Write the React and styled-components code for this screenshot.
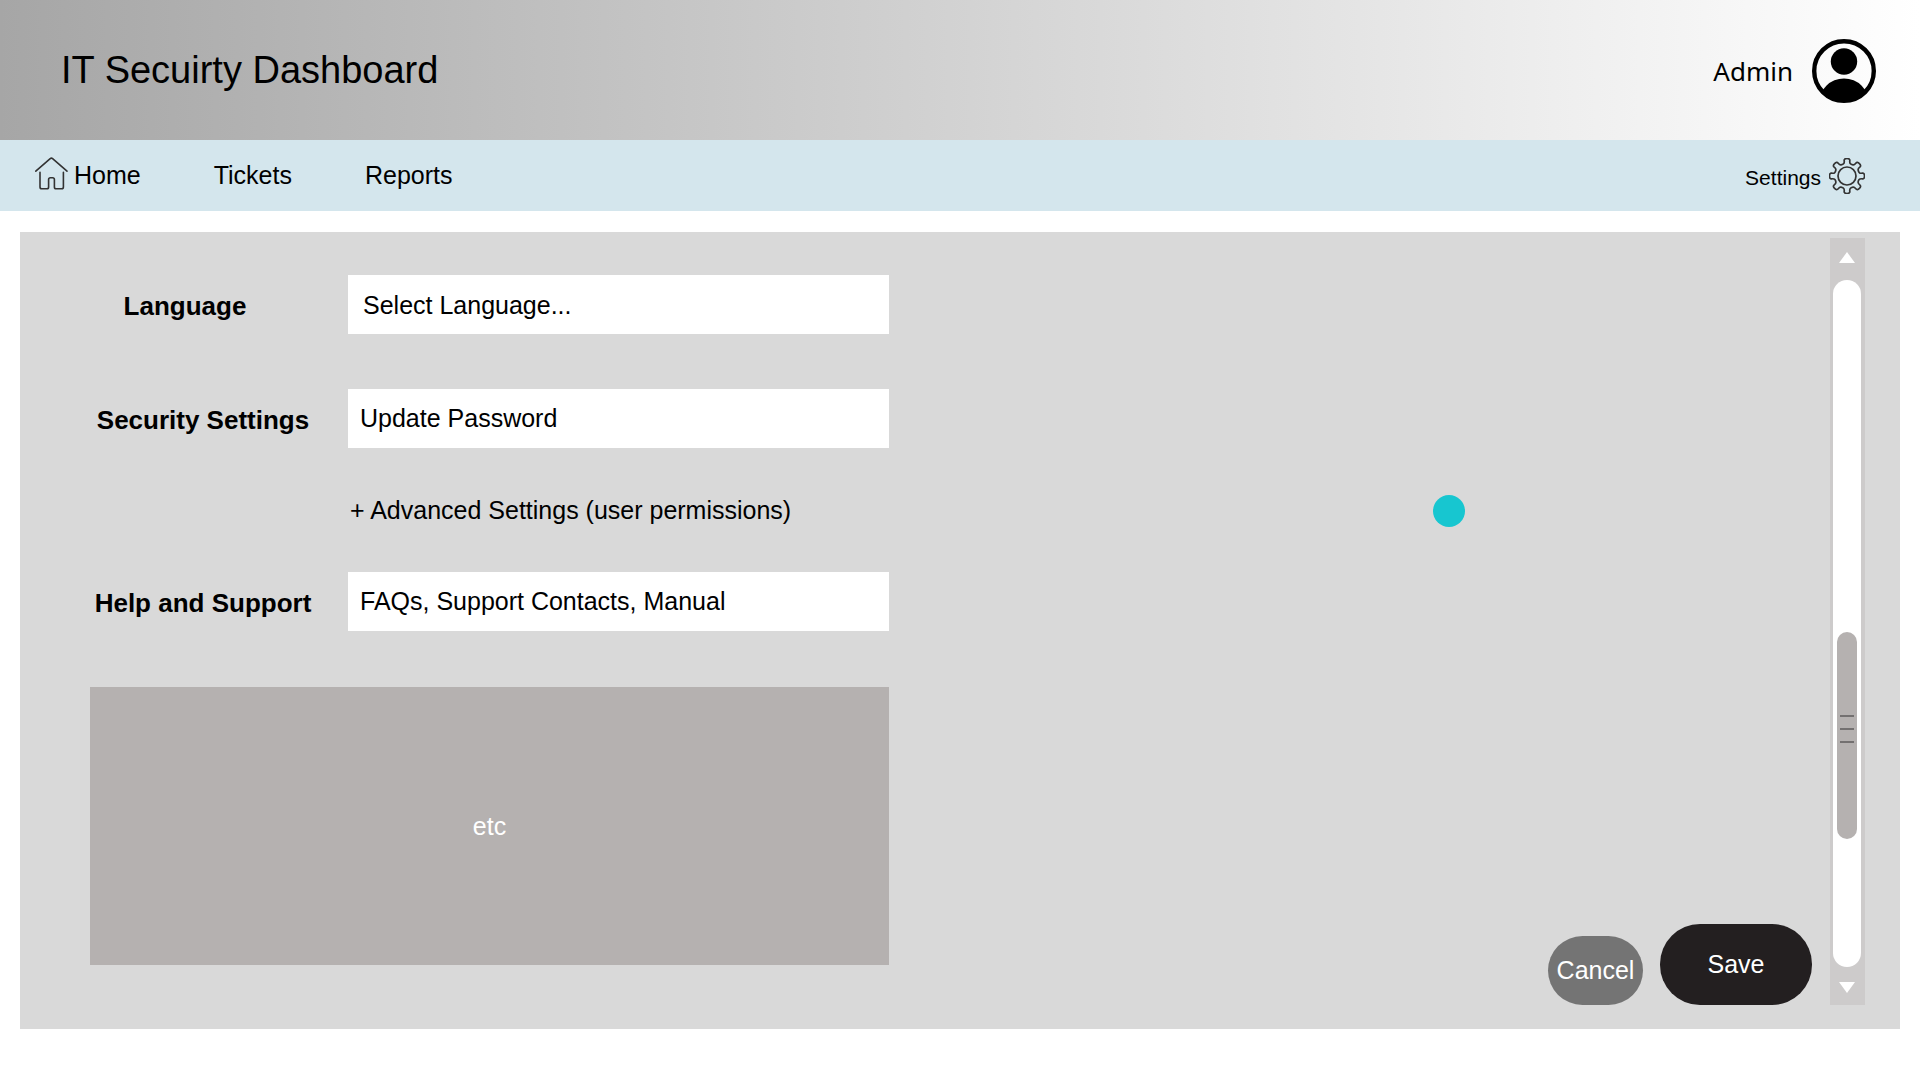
import React from "react";
import styled, { createGlobalStyle } from "styled-components";

const GlobalStyle = createGlobalStyle`
  *, *::before, *::after { box-sizing: border-box; }
  body {
    margin: 0;
    background: #fff;
    color: #000;
    font-family: "Liberation Sans", Arial, sans-serif;
    font-size: 25px;
  }
  button, input, select { font: inherit; color: inherit; border: 0; border-radius: 0; margin: 0; }
  a { color: inherit; text-decoration: none; }
  svg { display: block; flex: none; }
`;

const Header = styled.header`
  display: flex;
  align-items: center;
  justify-content: space-between;
  height: 140px;
  padding: 2px 44px 0 61px;
  background: linear-gradient(90deg, #a6a6a6, #fff);
`;

const Title = styled.h1`
  margin: 0;
  padding-bottom: 2px;
  font-size: 38px;
  font-weight: 400;
`;

const Account = styled.a`
  display: flex;
  align-items: center;
  gap: 19px;
  font-family: "Noto Sans", sans-serif;
  font-size: 26px;
`;

const Nav = styled.nav`
  display: flex;
  align-items: center;
  justify-content: space-between;
  height: 71px;
  padding: 0 55px 0 34px;
  background: #d4e6ed;
`;

const NavLinks = styled.div`
  display: flex;
  align-items: center;
  gap: 73px;
`;

const NavLink = styled.a`
  display: flex;
  align-items: center;
  gap: 5px;
`;

const SettingsLink = styled.a`
  display: flex;
  align-items: center;
  gap: 8px;
  font-size: 21px;

  span { padding-top: 4px; }
`;

const Panel = styled.main`
  position: relative;
  display: flex;
  gap: 18px;
  margin: 21px 20px;
  padding: 6px 35px 24px 70px;
  background: #d9d9d9;
`;

const Form = styled.form`
  display: flex;
  flex: 1;
  justify-content: space-between;
`;

const Fields = styled.div`
  display: flex;
  flex-direction: column;
  padding: 37px 0 40px;
`;

const Row = styled.div`
  display: grid;
  grid-template-columns: 258px 541px;
  align-items: center;
  margin-bottom: ${(p) => p.$gap || 0}px;
`;

const Label = styled.label`
  padding: 4px ${(p) => (p.$inset ? 68 : 32)}px 0 0;
  font-size: 26px;
  font-weight: 700;
  text-align: center;
`;

const TextBox = styled.input`
  width: 100%;
  height: 59px;
  padding: 0 12px;
  background: #fff;
  outline: 0;
`;

const Select = styled.select`
  width: 100%;
  height: 59px;
  padding: 0 15px;
  background: #fff;
  appearance: none;
  outline: 0;
`;

const Advanced = styled.button`
  align-self: flex-start;
  margin-left: 260px;
  padding: 47px 0;
  line-height: 30px;
  background: none;
`;

const Extra = styled.section`
  display: flex;
  align-items: center;
  justify-content: center;
  height: 278px;
  color: #fff;
  background: #b5b1b0;
`;

const Actions = styled.div`
  display: flex;
  align-items: flex-end;
  align-self: flex-end;
  gap: 17px;
`;

const Pill = styled.button`
  width: ${(p) => (p.$primary ? 152 : 95)}px;
  height: ${(p) => (p.$primary ? 81 : 69)}px;
  padding: 0;
  && { border-radius: 40px; color: #fff; }
  background: ${(p) => (p.$primary ? "#231f20" : "#747474")};
`;

const Marker = styled.span`
  position: absolute;
  top: 263px;
  left: 75.16%;
  width: 32px;
  height: 32px;
  border-radius: 50%;
  background: #17c6d0;
`;

const Scrollbar = styled.aside`
  display: flex;
  flex-direction: column;
  align-items: center;
  width: 35px;
  padding-right: 1px;
  background: #cdcbcb;
`;

const Arrow = styled.button`
  display: flex;
  align-items: center;
  justify-content: center;
  width: 100%;
  height: ${(p) => (p.$down ? 38 : 42)}px;
  padding: ${(p) => (p.$down ? 2 : 0)}px 0 ${(p) => (p.$down ? 0 : 4)}px;
  background: none;
`;

const Track = styled.div`
  display: flex;
  flex: 1;
  justify-content: center;
  width: 28px;
  padding: 352px 0 128px;
  border-radius: 14px;
  background: #fff;
`;

const Thumb = styled.div`
  display: flex;
  flex-direction: column;
  align-items: center;
  justify-content: center;
  gap: 11px;
  width: 20px;
  padding-bottom: 14px;
  border-radius: 10px;
  background: #b5b1b0;
`;

const Grip = styled.i`
  width: 14px;
  height: 2px;
  background: #737070;
`;

function HomeIcon() {
  return (
    <svg width="35" height="40" viewBox="0 0 35 40" fill="none" stroke="#333" strokeWidth="1.6" strokeLinecap="round" strokeLinejoin="round" aria-hidden="true">
      <path d="M1.8 15.2 16.2 2.6Q17.4 1.6 18.6 2.6L33 15.2" />
      <path d="M6 16.2V31Q6 32.8 7.8 32.8H13Q14.6 32.8 14.6 31V23.6Q14.6 21.8 16.4 21.8H18.6Q20.4 21.8 20.4 23.6V31Q20.4 32.8 22 32.8H27.6Q29.4 32.8 29.4 31V16.2" />
    </svg>
  );
}

const polar = (r, deg) => {
  const a = (deg * Math.PI) / 180;
  return [18 + r * Math.sin(a), 18 - r * Math.cos(a)];
};

function gearPath() {
  const profile = [[17.8, -10], [17.8, 10], [13.2, 11], [12.2, 22.5], [13.2, 34]];
  const pts = [];
  for (let tooth = 0; tooth < 8; tooth++) {
    profile.forEach(([r, a]) => pts.push(polar(r, a + tooth * 45)));
  }
  const mid = (p, q) => `${((p[0] + q[0]) / 2).toFixed(2)} ${((p[1] + q[1]) / 2).toFixed(2)}`;
  const curves = pts.map((p, i) => `Q${p[0].toFixed(2)} ${p[1].toFixed(2)} ${mid(p, pts[(i + 1) % pts.length])}`);
  return `M${mid(pts[pts.length - 1], pts[0])}${curves.join("")}Z`;
}

function GearIcon() {
  return (
    <svg width="36" height="36" viewBox="0 0 36 36" fill="none" stroke="#333" strokeWidth="1.7" aria-hidden="true">
      <path d={gearPath()} />
      <circle cx="18" cy="18" r="9" />
    </svg>
  );
}

function AvatarIcon() {
  return (
    <svg width="64" height="64" viewBox="0 0 64 64" aria-hidden="true">
      <clipPath id="avatar-clip"><circle cx="32" cy="32" r="31" /></clipPath>
      <circle cx="32" cy="32" r="29.8" fill="none" stroke="#000" strokeWidth="4.4" />
      <circle cx="32" cy="22.5" r="13.2" />
      <circle cx="32" cy="64.4" r="25" clipPath="url(#avatar-clip)" />
    </svg>
  );
}

function Triangle({ down }) {
  return (
    <svg width="16" height="11" viewBox="0 0 16 11" fill="#fff" aria-hidden="true">
      <path d={down ? "M0 0H16L8 11Z" : "M0 11H16L8 0Z"} />
    </svg>
  );
}

export default function App() {
  return (
    <>
      <GlobalStyle />
      <Header>
        <Title>IT Secuirty Dashboard</Title>
        <Account href="#account">
          Admin
          <AvatarIcon />
        </Account>
      </Header>
      <Nav>
        <NavLinks>
          <NavLink href="#home"><HomeIcon />Home</NavLink>
          <NavLink href="#tickets">Tickets</NavLink>
          <NavLink href="#reports">Reports</NavLink>
        </NavLinks>
        <SettingsLink href="#settings"><span>Settings</span><GearIcon /></SettingsLink>
      </Nav>
      <Panel>
        <Form onSubmit={(e) => e.preventDefault()}>
          <Fields>
            <Row $gap={55}>
              <Label htmlFor="language" $inset>Language</Label>
              <Select id="language"><option>Select Language...</option></Select>
            </Row>
            <Row>
              <Label htmlFor="security">Security Settings</Label>
              <TextBox id="security" type="text" defaultValue="Update Password" />
            </Row>
            <Advanced type="button">+ Advanced Settings (user permissions)</Advanced>
            <Row $gap={56}>
              <Label htmlFor="help">Help and Support</Label>
              <TextBox id="help" type="text" defaultValue="FAQs, Support Contacts, Manual" />
            </Row>
            <Extra>etc</Extra>
          </Fields>
          <Actions>
            <Pill type="button">Cancel</Pill>
            <Pill type="submit" $primary>Save</Pill>
          </Actions>
        </Form>
        <Scrollbar>
          <Arrow type="button" aria-label="Scroll up"><Triangle /></Arrow>
          <Track>
            <Thumb><Grip /><Grip /><Grip /></Thumb>
          </Track>
          <Arrow type="button" aria-label="Scroll down" $down><Triangle down /></Arrow>
        </Scrollbar>
        <Marker />
      </Panel>
    </>
  );
}
